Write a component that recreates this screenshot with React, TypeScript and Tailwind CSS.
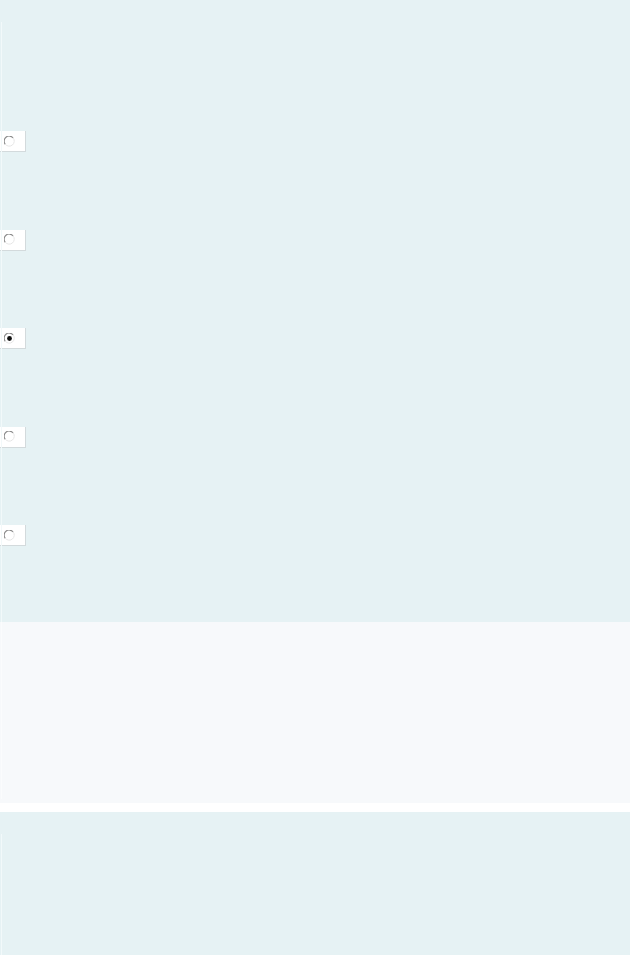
import React from 'react';

function Radio({ checked }: { checked?: boolean }) {
  return (
    <div className="flex h-[21px] w-[26px] items-center border-r border-b border-[#d3dadc] bg-white pl-[4px]">
      <svg width="11" height="11" viewBox="0 0 11 11">
        <circle cx="5.5" cy="5.5" r="5" fill="#ffffff" />
        {/* dark upper-left arc, light lower-right arc */}
        <path d="M1.3 8.3 A4.9 4.9 0 0 1 9.1 1.9" fill="none" stroke="#8a8a8a" strokeWidth="1.1" />
        <path d="M9.1 1.9 A4.9 4.9 0 0 1 1.3 8.3" fill="none" stroke="#e6e6e6" strokeWidth="1" />
        {checked && <circle cx="5.5" cy="5.5" r="2.4" fill="#111111" />}
      </svg>
    </div>
  );
}

export default function App() {
  const options = [false, false, true, false, false];

  return (
    <div className="flex min-h-[955px] w-[630px] flex-col bg-white">
      {/* question panel */}
      <div className="relative h-[622px] bg-[#e6f2f4] pt-[131px]">
        <div className="absolute left-[1px] top-[22px] bottom-0 w-px bg-[#f2f9fa]" />
        {options.map((checked, idx) => (
          <div key={idx} className="h-[98.5px]">
            <Radio checked={checked} />
          </div>
        ))}
      </div>

      {/* lighter panel */}
      <div className="relative h-[181px] bg-[#f7f9fb]">
        <div className="absolute left-[1px] top-0 bottom-[4px] w-px bg-[#fbfcfd]" />
      </div>

      <div className="h-[9px] bg-white" />

      {/* bottom panel */}
      <div className="relative h-[143px] bg-[#e6f2f4]">
        <div className="absolute left-[1px] top-[22px] bottom-0 w-px bg-[#f2f9fa]" />
      </div>
    </div>
  );
}
